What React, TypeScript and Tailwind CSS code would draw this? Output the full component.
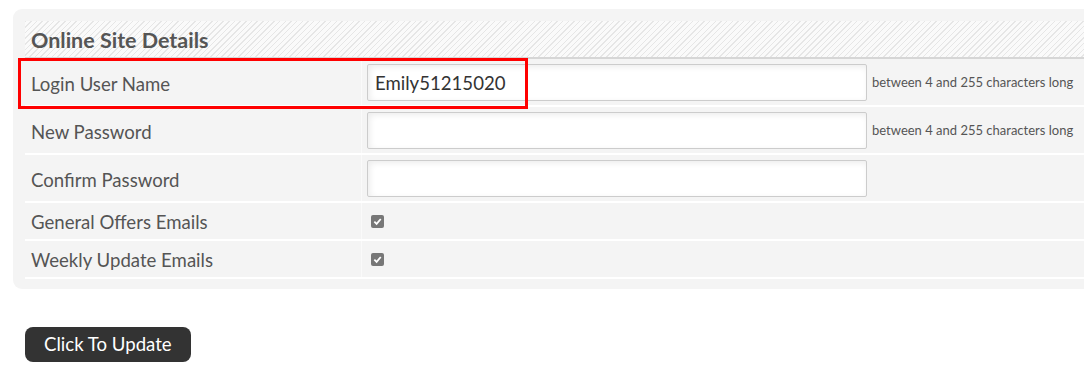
const ROWS = [
  { label: 'Login User Name', kind: 'text', value: 'Emily51215020', help: 'between 4 and 255 characters long' },
  { label: 'New Password', kind: 'password', value: '', help: 'between 4 and 255 characters long' },
  { label: 'Confirm Password', kind: 'password', value: '', help: '' },
]

const CHECKS = ['General Offers Emails', 'Weekly Update Emails']

function Check() {
  return (
    <span className="flex h-[13px] w-[13px] items-center justify-center rounded-[2px] bg-[#777]">
      <svg width="9" height="9" viewBox="0 0 10 10">
        <path d="M1.5 5.2 L4 7.6 L8.6 2.2" fill="none" stroke="#fff" strokeWidth="2" />
      </svg>
    </span>
  )
}

export default function App() {
  return (
    <div className="relative h-[376px] w-[1084px] overflow-hidden bg-white font-['Lato','Open_Sans',sans-serif] text-[#555]">
      <div className="ml-[13px] mt-[9px] w-[1120px] rounded-[9px] bg-[#f4f4f4] px-[12px] pt-[12px] pb-[10px]">
        <div className="flex h-[38px] items-center border-b-2 border-[#d6d6d6] bg-[repeating-linear-gradient(135deg,#e6e6e6_0px,#e6e6e6_1px,#fafafa_1px,#fafafa_4px)] pl-[6px] pt-[2px]">
          <h2 className="text-[21.5px] font-bold">Online Site Details</h2>
        </div>
        {ROWS.map(r => (
          <div key={r.label} className="flex h-[48px] items-center border-b-2 border-white">
            <div className="w-[336px] pl-[6px] pt-[5px] text-[18.6px]">{r.label}</div>
            <div className="flex h-full items-center border-l border-[#fafafa] pl-[5px]">
              <div className="flex h-[37px] w-[500px] items-center rounded-[2px] border border-[#ccc] bg-white px-[7px] pt-[3px] text-[18.6px] text-[#333] shadow-[inset_2px_2px_6px_rgba(0,0,0,0.08)]">
                {r.value}
              </div>
              <span className="pl-[5px] pt-[1px] text-[13px]">{r.help}</span>
            </div>
          </div>
        ))}
        {CHECKS.map(c => (
          <div key={c} className="flex h-[38px] items-center border-b-2 border-white">
            <div className="w-[336px] pl-[6px] pt-[3px] text-[18.6px]">{c}</div>
            <div className="flex h-full items-center border-l border-[#fafafa] pl-[9px] pt-[1px]">
              <Check />
            </div>
          </div>
        ))}
      </div>
      <button className="ml-[25px] mt-[38px] h-[35px] rounded-[8px] bg-[#333] px-[19px] pt-[1px] text-[18.6px] text-white">
        Click To Update
      </button>
      {/* highlight annotation */}
      <div className="pointer-events-none absolute left-[18px] top-[58px] h-[51px] w-[510px] border-[3px] border-[#f00]" />
    </div>
  )
}
